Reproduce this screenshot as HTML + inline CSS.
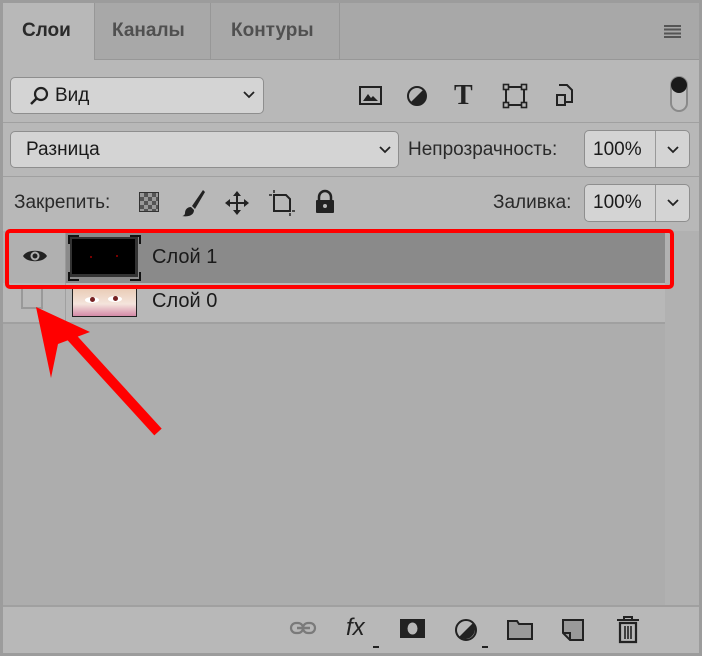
<!DOCTYPE html><html><head><meta charset="utf-8"><style>
body{margin:0;width:702px;height:656px;background:#9c9c9c;font-family:"Liberation Sans",sans-serif;overflow:hidden;position:relative}
.a{position:absolute}
.box{position:absolute;background:#d4d4d4;border:1px solid #8e8e8e;border-radius:5px;box-sizing:border-box}
.t{font-size:19px;color:#1a1a1a}
</style></head><body>
<div class="a" style="left:3px;top:3px;width:696px;height:650px;background:#b8b8b8"></div>
<div class="a" style="left:3px;top:3px;width:696px;height:56px;background:#a8a8a8;border-bottom:1px solid #979797"></div>
<div class="a" style="left:3px;top:3px;width:91px;height:57px;background:#b8b8b8;border-right:1px solid #979797"></div>
<div class="a" style="left:210px;top:3px;width:1px;height:56px;background:#979797"></div>
<div class="a" style="left:339px;top:3px;width:1px;height:56px;background:#979797"></div>
<div class="a" style="left:22px;top:20px;font-size:19px;font-weight:bold;color:#2a2a2a">Слои</div>
<div class="a" style="left:112px;top:20px;font-size:19px;font-weight:bold;color:#505050">Каналы</div>
<div class="a" style="left:231px;top:20px;font-size:19px;font-weight:bold;color:#505050">Контуры</div>
<div class="a" style="left:664px;top:25px;width:17px;height:13px;background:repeating-linear-gradient(#555 0 2px,transparent 2px 3.7px)"></div>
<div class="box" style="left:10px;top:77px;width:254px;height:37px"></div>
<svg class="a" style="left:28px;top:85px" width="22" height="22"><circle cx="13" cy="9" r="6" fill="none" stroke="#222" stroke-width="2.2"/><line x1="9" y1="13" x2="3" y2="19" stroke="#222" stroke-width="2.5"/></svg>
<div class="a t" style="left:55px;top:85px">Вид</div>
<svg class="a" style="left:243px;top:91px" width="12" height="8"><path d="M1 1l5 5 5-5" fill="none" stroke="#222" stroke-width="1.8"/></svg>
<svg class="a" style="left:358px;top:84px" width="26" height="24"><rect x="2" y="3" width="21" height="17" fill="none" stroke="#222" stroke-width="2"/><path d="M5 17l5-7 3 4 2-2 5 5z" fill="#222"/></svg>
<svg class="a" style="left:405px;top:84px" width="24" height="24"><circle cx="12" cy="12" r="9" fill="none" stroke="#222" stroke-width="2"/><path d="M18.4 5.6A9 9 0 0 1 5.6 18.4z" fill="#222"/></svg>
<div class="a" style="left:454px;top:80px;font-family:'Liberation Serif',serif;font-weight:bold;font-size:28px;color:#222">T</div>
<svg class="a" style="left:502px;top:83px" width="26" height="26"><rect x="4" y="4" width="18" height="18" fill="none" stroke="#222" stroke-width="2"/><g fill="#b8b8b8" stroke="#222" stroke-width="1.6"><rect x="1.5" y="1.5" width="5" height="5"/><rect x="19.5" y="1.5" width="5" height="5"/><rect x="1.5" y="19.5" width="5" height="5"/><rect x="19.5" y="19.5" width="5" height="5"/></g></svg>
<svg class="a" style="left:553px;top:83px" width="22" height="26"><path d="M6 2h8l5 5v12H13" fill="none" stroke="#222" stroke-width="2"/><rect x="3" y="11" width="10" height="12" fill="#222"/><rect x="5" y="13" width="6" height="8" fill="#b8b8b8"/></svg>
<div class="a" style="left:670px;top:76px;width:18px;height:36px;border:2px solid #8a8a8a;border-radius:10px;box-sizing:border-box;background:#c0c0c0"></div>
<div class="a" style="left:671px;top:77px;width:16px;height:16px;border-radius:50%;background:#1a1a1a"></div>
<div class="a" style="left:3px;top:122px;width:696px;height:1px;background:#a0a0a0"></div>
<div class="box" style="left:10px;top:131px;width:389px;height:37px"></div>
<div class="a t" style="left:26px;top:139px">Разница</div>
<svg class="a" style="left:379px;top:146px" width="12" height="8"><path d="M1 1l5 5 5-5" fill="none" stroke="#222" stroke-width="1.8"/></svg>
<div class="a t" style="left:408px;top:139px;color:#2a2a2a">Непрозрачность:</div>
<div class="box" style="left:584px;top:130px;width:106px;height:38px"></div>
<div class="a" style="left:655px;top:131px;width:1px;height:36px;background:#999"></div>
<div class="a t" style="left:593px;top:139px">100%</div>
<svg class="a" style="left:667px;top:146px" width="12" height="8"><path d="M1 1l5 5 5-5" fill="none" stroke="#222" stroke-width="1.8"/></svg>
<div class="a" style="left:3px;top:176px;width:696px;height:1px;background:#a0a0a0"></div>
<div class="a t" style="left:14px;top:192px;color:#2a2a2a">Закрепить:</div>
<div class="a" style="left:139px;top:192px;width:20px;height:20px;background:conic-gradient(#555 25%,#999 0 50%,#555 0 75%,#999 0) 0 0/8px 8px;border:1px solid #333;box-sizing:border-box"></div>
<svg class="a" style="left:180px;top:188px" width="26" height="30"><path d="M23 2L12 18l3 3L25 4z" fill="#222"/><path d="M11 19c-4 0-6 3-6 6 0 2-2 3-3 3 5 1 12 0 12-6z" fill="#222"/></svg>
<svg class="a" style="left:224px;top:190px" width="26" height="26"><path d="M13 1l4 5h-3v6h6V9l5 4-5 4v-3h-6v6h3l-4 5-4-5h3v-6H6v3l-5-4 5-4v3h6V6H9z" fill="#222"/></svg>
<svg class="a" style="left:267px;top:190px" width="28" height="26"><path d="M7 5h12l4 4v12H7z" fill="none" stroke="#222" stroke-width="2"/><g stroke="#222" stroke-width="1.5"><path d="M2 5h3M7 0v3M25 21h3M23 23v3"/></g></svg>
<svg class="a" style="left:314px;top:189px" width="22" height="26"><path d="M5 11V8a6 6 0 0 1 12 0v3" fill="none" stroke="#222" stroke-width="2.5"/><rect x="2" y="11" width="18" height="13" rx="1" fill="#222"/><circle cx="11" cy="17" r="2" fill="#b8b8b8"/></svg>
<div class="a t" style="left:493px;top:192px;color:#2a2a2a">Заливка:</div>
<div class="box" style="left:584px;top:184px;width:106px;height:38px"></div>
<div class="a" style="left:655px;top:185px;width:1px;height:36px;background:#999"></div>
<div class="a t" style="left:593px;top:192px">100%</div>
<svg class="a" style="left:667px;top:199px" width="12" height="8"><path d="M1 1l5 5 5-5" fill="none" stroke="#222" stroke-width="1.8"/></svg>
<div class="a" style="left:3px;top:231px;width:662px;height:374px;background:#adadad"></div>
<div class="a" style="left:665px;top:231px;width:34px;height:374px;background:#b1b1b1"></div>
<div class="a" style="left:3px;top:233px;width:662px;height:50px;background:#8a8a8a"></div>
<div class="a" style="left:3px;top:233px;width:62px;height:50px;background:#b0b0b0;border-right:1px solid #9a9a9a"></div>
<div class="a" style="left:3px;top:283px;width:662px;height:39px;background:#b8b8b8;border-bottom:2px solid #a0a0a0"></div>
<div class="a" style="left:65px;top:283px;width:1px;height:39px;background:#a0a0a0"></div>
<svg class="a" style="left:22px;top:247px" width="26" height="18"><path d="M1 9C5 2 21 2 25 9 21 16 5 16 1 9z" fill="#222"/><circle cx="13" cy="9" r="4.5" fill="#b0b0b0"/><circle cx="13" cy="9" r="2.5" fill="#222"/></svg>
<div class="a" style="left:21px;top:287px;width:22px;height:22px;border:2px solid #999;box-sizing:border-box"></div>
<svg class="a" style="left:67px;top:234px" width="75" height="48"><g fill="none" stroke="#111" stroke-width="2"><path d="M2 10V2h10M63 2h10v8M2 38v8h10M63 46h10v-8"/></g></svg>
<div class="a" style="left:70px;top:237px;width:68px;height:40px;background:#333"></div>
<div class="a" style="left:72px;top:239px;width:63px;height:35px;background:#000"></div>
<div class="a" style="left:90px;top:256px;width:2px;height:2px;background:#700"></div>
<div class="a" style="left:116px;top:255px;width:2px;height:2px;background:#700"></div>
<div class="a" style="left:72px;top:285px;width:63px;height:30px;background:linear-gradient(#e8c8b0,#f4e4dc 60%,#d48aa8);border:1px solid #222"></div>
<div class="a" style="left:85px;top:297px;width:14px;height:6px;border-radius:50%;background:#fff"></div><div class="a" style="left:90px;top:297px;width:5px;height:5px;border-radius:50%;background:#722"></div>
<div class="a" style="left:108px;top:296px;width:14px;height:6px;border-radius:50%;background:#fff"></div><div class="a" style="left:113px;top:296px;width:5px;height:5px;border-radius:50%;background:#722"></div>
<div class="a t" style="left:152px;top:246px;font-size:20px">Слой 1</div>
<div class="a t" style="left:152px;top:290px;font-size:20px">Слой 0</div>
<div class="a" style="left:5px;top:229px;width:661px;height:52px;border:4px solid #f00;border-radius:5px"></div>
<svg class="a" style="left:30px;top:300px" width="140" height="140"><line x1="128" y1="132" x2="35" y2="30" stroke="#f00" stroke-width="10"/><path d="M6 7L60 32 28 44 21 78z" fill="#f00"/></svg>
<div class="a" style="left:3px;top:605px;width:696px;height:2px;background:#a0a0a0"></div>
<svg class="a" style="left:289px;top:620px" width="30" height="16"><rect x="2" y="3" width="12" height="10" rx="5" fill="none" stroke="#7a7a7a" stroke-width="2.2"/><rect x="14" y="3" width="12" height="10" rx="5" fill="none" stroke="#7a7a7a" stroke-width="2.2"/><line x1="8" y1="8" x2="21" y2="8" stroke="#7a7a7a" stroke-width="2.5"/></svg>
<div class="a" style="left:346px;top:614px;font-size:24px;font-style:italic;color:#222">fx</div>
<div class="a" style="left:373px;top:646px;width:6px;height:2px;background:#222"></div>
<svg class="a" style="left:399px;top:618px" width="28" height="22"><rect x="1" y="1" width="25" height="19" fill="#222"/><ellipse cx="13.5" cy="10.5" rx="5" ry="6" fill="#b8b8b8"/></svg>
<svg class="a" style="left:453px;top:617px" width="26" height="26"><circle cx="13" cy="13" r="10" fill="none" stroke="#222" stroke-width="2"/><path d="M20 6A10 10 0 0 1 6 20z" fill="#222"/></svg>
<div class="a" style="left:482px;top:646px;width:6px;height:2px;background:#222"></div>
<svg class="a" style="left:506px;top:619px" width="28" height="22"><path d="M2 2h9l2 3h13v15H2z" fill="#9a9a9a" stroke="#222" stroke-width="2"/></svg>
<svg class="a" style="left:561px;top:618px" width="24" height="24"><path d="M2 2h20v20H9l-7-7z" fill="#9a9a9a" stroke="#222" stroke-width="2"/><path d="M2 15h7v7" fill="none" stroke="#222" stroke-width="2"/></svg>
<svg class="a" style="left:615px;top:615px" width="26" height="30"><path d="M2 5h22M9 5V2h8v3" fill="none" stroke="#222" stroke-width="2"/><path d="M5 8h16v19H5z" fill="none" stroke="#222" stroke-width="2.2"/><path d="M10 11v13M13 11v13M16 11v13" stroke="#222" stroke-width="1.6"/></svg>
</body></html>
